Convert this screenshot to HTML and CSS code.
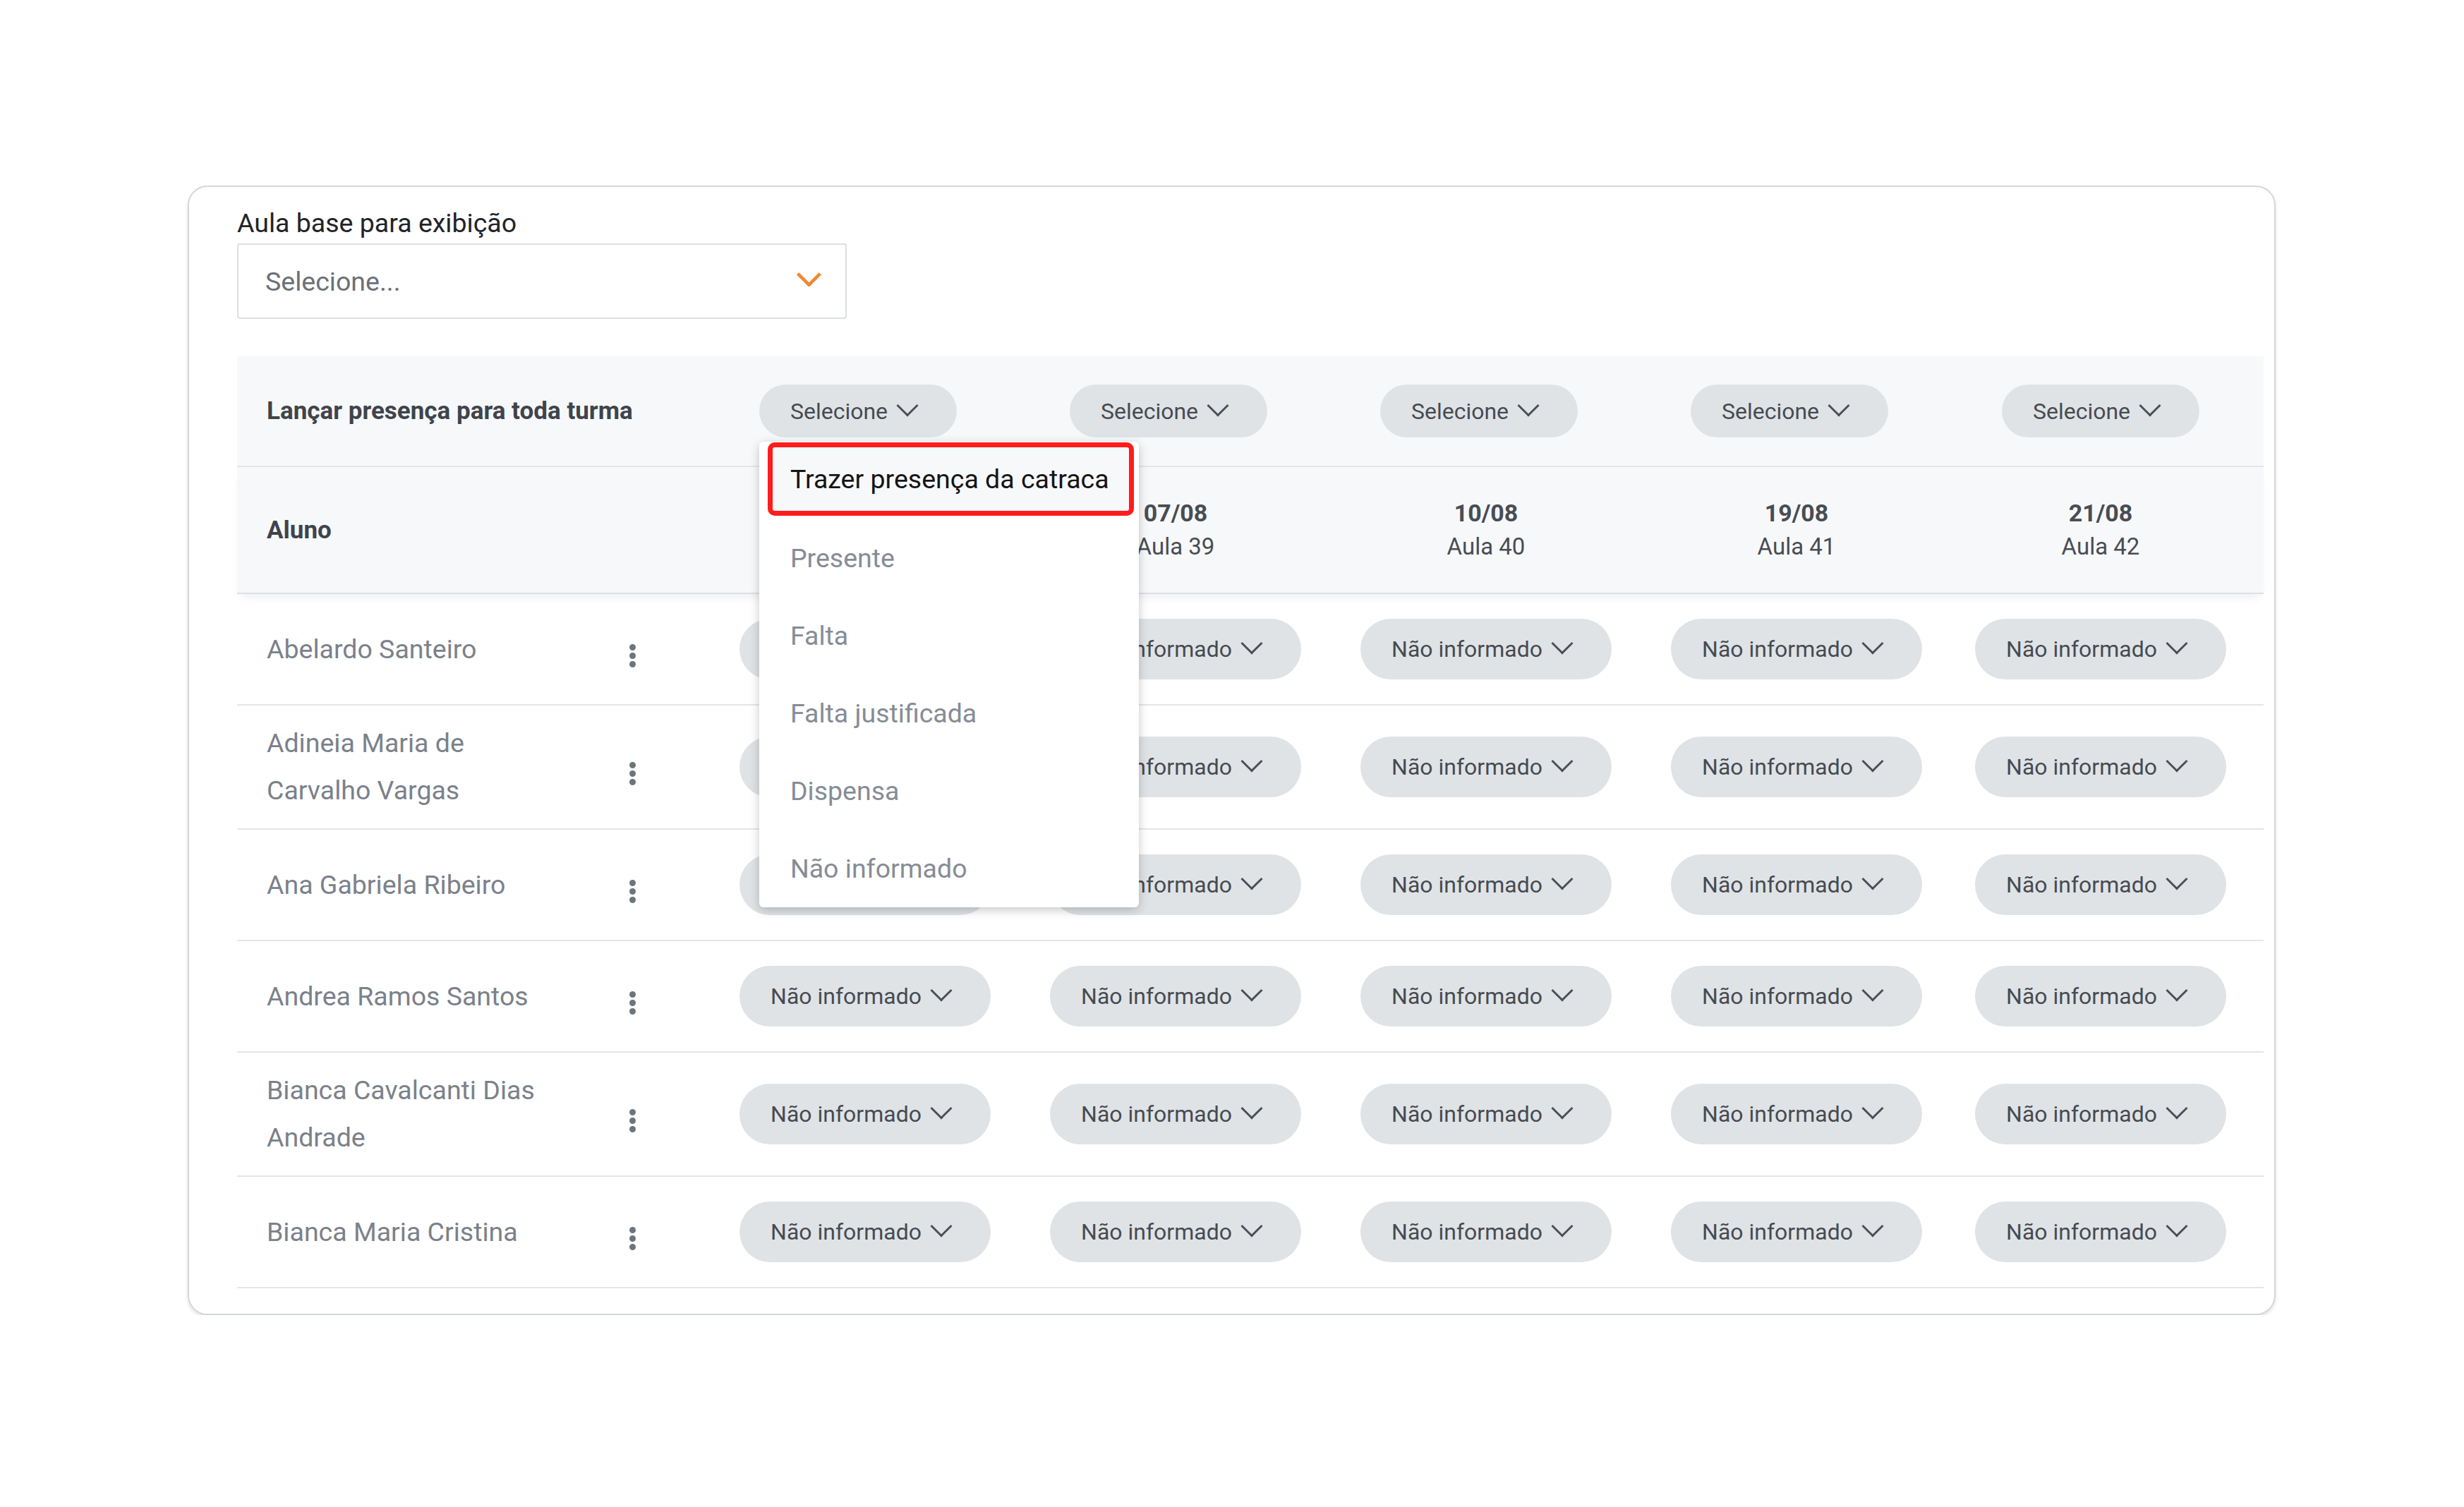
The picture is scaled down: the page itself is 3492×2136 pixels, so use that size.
FILE: index.html
```html
<!DOCTYPE html>
<html lang="pt-BR">
<head>
    <meta charset="UTF-8">
    <meta name="viewport" content="width=device-width, initial-scale=1.0">
    <title>Frequência da turma</title>
    <link rel="stylesheet" href="styles.css">
</head>
<body>
    <div class="pagina">
        <div class="cartao">
            <label class="rotulo">Aula base para exibição</label>
            <div class="select">Selecione...</div>

            <div class="tabela">
                <!-- Lançamento para a turma toda -->
                <div class="linha cab cab-lancar">
                    <div class="nome"><span class="titulo">Lançar presença para toda turma</span></div>
                    <div class="cel">
                        <div class="seletor">
                            <button class="pilula">Selecione</button>
                            <ul class="menu">
                                <li class="destaque">Trazer presença da catraca</li>
                                <li>Presente</li>
                                <li>Falta</li>
                                <li>Falta justificada</li>
                                <li>Dispensa</li>
                                <li>Não informado</li>
                            </ul>
                        </div>
                    </div>
                    <div class="cel"><button class="pilula">Selecione</button></div>
                    <div class="cel"><button class="pilula">Selecione</button></div>
                    <div class="cel"><button class="pilula">Selecione</button></div>
                    <div class="cel"><button class="pilula">Selecione</button></div>
                </div>

                <div class="linha cab cab-datas">
                    <div class="nome"><span class="titulo">Aluno</span></div>
                    <div class="cel data"><b>05/08</b><span>Aula 38</span></div>
                    <div class="cel data"><b>07/08</b><span>Aula 39</span></div>
                    <div class="cel data"><b>10/08</b><span>Aula 40</span></div>
                    <div class="cel data"><b>19/08</b><span>Aula 41</span></div>
                    <div class="cel data"><b>21/08</b><span>Aula 42</span></div>
                </div>

                <div class="linha aluno">
                    <div class="nome"><span class="nome-texto">Abelardo Santeiro</span><span class="kebab"></span></div>
                    <div class="cel"><button class="pilula grande">Não informado</button></div>
                    <div class="cel"><button class="pilula grande">Não informado</button></div>
                    <div class="cel"><button class="pilula grande">Não informado</button></div>
                    <div class="cel"><button class="pilula grande">Não informado</button></div>
                    <div class="cel"><button class="pilula grande">Não informado</button></div>
                </div>

                <div class="linha aluno">
                    <div class="nome"><span class="nome-texto">Adineia Maria de Carvalho Vargas</span><span class="kebab"></span></div>
                    <div class="cel"><button class="pilula grande">Não informado</button></div>
                    <div class="cel"><button class="pilula grande">Não informado</button></div>
                    <div class="cel"><button class="pilula grande">Não informado</button></div>
                    <div class="cel"><button class="pilula grande">Não informado</button></div>
                    <div class="cel"><button class="pilula grande">Não informado</button></div>
                </div>

                <div class="linha aluno">
                    <div class="nome"><span class="nome-texto">Ana Gabriela Ribeiro</span><span class="kebab"></span></div>
                    <div class="cel"><button class="pilula grande">Não informado</button></div>
                    <div class="cel"><button class="pilula grande">Não informado</button></div>
                    <div class="cel"><button class="pilula grande">Não informado</button></div>
                    <div class="cel"><button class="pilula grande">Não informado</button></div>
                    <div class="cel"><button class="pilula grande">Não informado</button></div>
                </div>

                <div class="linha aluno">
                    <div class="nome"><span class="nome-texto">Andrea Ramos Santos</span><span class="kebab"></span></div>
                    <div class="cel"><button class="pilula grande">Não informado</button></div>
                    <div class="cel"><button class="pilula grande">Não informado</button></div>
                    <div class="cel"><button class="pilula grande">Não informado</button></div>
                    <div class="cel"><button class="pilula grande">Não informado</button></div>
                    <div class="cel"><button class="pilula grande">Não informado</button></div>
                </div>

                <div class="linha aluno">
                    <div class="nome"><span class="nome-texto">Bianca Cavalcanti Dias Andrade</span><span class="kebab"></span></div>
                    <div class="cel"><button class="pilula grande">Não informado</button></div>
                    <div class="cel"><button class="pilula grande">Não informado</button></div>
                    <div class="cel"><button class="pilula grande">Não informado</button></div>
                    <div class="cel"><button class="pilula grande">Não informado</button></div>
                    <div class="cel"><button class="pilula grande">Não informado</button></div>
                </div>

                <div class="linha aluno">
                    <div class="nome"><span class="nome-texto">Bianca Maria Cristina</span><span class="kebab"></span></div>
                    <div class="cel"><button class="pilula grande">Não informado</button></div>
                    <div class="cel"><button class="pilula grande">Não informado</button></div>
                    <div class="cel"><button class="pilula grande">Não informado</button></div>
                    <div class="cel"><button class="pilula grande">Não informado</button></div>
                    <div class="cel"><button class="pilula grande">Não informado</button></div>
                </div>
            </div>
        </div>
    </div>
</body>
</html>
```

FILE: styles.css
```css
body {
    margin: 0;
    font-family: Roboto, "Noto Sans", Arial, sans-serif;
    background-color: #fff;
}
.pagina {
    padding: 263px 0 0 266px;
}
.cartao {
    width: 2959px;
    box-sizing: border-box;
    border: 2px solid #d3d6da;
    border-radius: 28px;
    padding: 30px 15px 36px 68px;
    box-shadow: 0 3px 5px rgba(0, 0, 0, 0.12);
}
.rotulo {
    display: block;
    font-size: 37.5px;
    line-height: 42px;
    color: #212428;
}
.select {
    margin-top: 8px;
    width: 864px;
    height: 107px;
    box-sizing: border-box;
    border: 2px solid #dcdfe3;
    border-radius: 4px;
    display: flex;
    align-items: center;
    justify-content: space-between;
    padding: 0 39px 0 38px;
    font-size: 37.5px;
    color: #6b7077;
}
.select::after {
    content: "";
    width: 20px;
    height: 20px;
    border-right: 5px solid #ee8a34;
    border-bottom: 5px solid #ee8a34;
    border-radius: 0 0 3px 0;
    transform: translateY(-9px) rotate(45deg);
}
.tabela {
    margin-top: 53px;
    width: 2872px;
}
.linha {
    display: grid;
    grid-template-columns: 670px 440px 440px 440px 440px 422px;
    padding-right: 20px;
    border-bottom: 2px solid #e3e6ea;
}
.linha > div {
    display: flex;
    align-items: center;
    justify-content: center;
}
.cab {
    background: #f7f8fa;
}
.cab-lancar {
    height: 155px;
}
.cab-lancar .cel {
    padding-right: 20px;
}
.cab-lancar .cel:last-child {
    padding-right: 0;
}
.cab-datas {
    height: 178px;
    border-bottom-color: #dcdfe3;
    box-shadow: 0 10px 14px -6px rgba(0, 0, 0, 0.07);
}
.linha > .nome {
    justify-content: flex-start;
    padding-left: 42px;
    padding-right: 105px;
}
.titulo {
    font-weight: bold;
    font-size: 35px;
    color: #3f444b;
}
.data {
    flex-direction: column;
    line-height: 48px;
    color: #484d54;
}
.data b {
    font-size: 34px;
}
.data span {
    font-size: 33px;
}
.aluno {
    padding-top: 20px;
    padding-bottom: 20px;
}
.aluno > div {
    min-height: 116px;
}
.nome-texto {
    width: 390px;
    font-size: 37.5px;
    line-height: 67px;
    color: #7b818a;
}
.kebab {
    margin-left: auto;
    margin-top: 18px;
    width: 9px;
    height: 9px;
    border-radius: 50%;
    background: #6f747c;
    box-shadow: 0 -12px 0 #6f747c, 0 12px 0 #6f747c;
}
.pilula {
    display: inline-flex;
    align-items: center;
    height: 75px;
    padding: 0 59px 0 44px;
    border: none;
    border-radius: 38px;
    background: #e0e3e6;
    font-family: inherit;
    font-size: 32px;
    color: #464b52;
    white-space: nowrap;
    cursor: pointer;
}
.pilula::after {
    content: "";
    margin-left: 17px;
    width: 19px;
    height: 19px;
    border-right: 3px solid #4a4f57;
    border-bottom: 3px solid #4a4f57;
    transform: translateY(-8px) rotate(45deg);
}
.pilula.grande {
    height: 86px;
    border-radius: 43px;
}
.seletor {
    position: relative;
    display: inline-flex;
}
.menu {
    position: absolute;
    left: 0;
    top: calc(100% + 6px);
    z-index: 10;
    width: 538px;
    box-sizing: border-box;
    margin: 0;
    padding: 1px 0 0;
    list-style: none;
    background: #fff;
    border-radius: 6px;
    box-shadow: 0 4px 14px rgba(0, 0, 0, 0.22);
}
.menu li {
    height: 110px;
    line-height: 110px;
    padding-left: 44px;
    font-size: 37.5px;
    color: #868c95;
    white-space: nowrap;
}
.menu li.destaque {
    height: 90px;
    line-height: 90px;
    margin: 0 7px 5px 12px;
    padding-left: 25px;
    border: 7px solid #ff1c1c;
    border-radius: 10px;
    background: #f7f8fa;
    color: #151515;
}
```
